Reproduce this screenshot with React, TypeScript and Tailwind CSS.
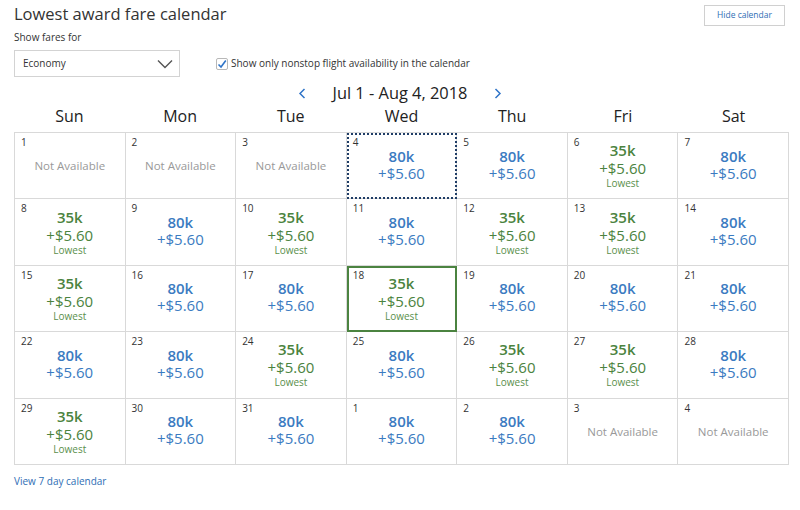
import React from 'react'

type Fare = 'na' | 'high' | 'low'

const DAYS = ['Sun', 'Mon', 'Tue', 'Wed', 'Thu', 'Fri', 'Sat']

const CELLS: { day: number; fare: Fare; mark?: 'focus' | 'selected' }[] = [
  { day: 1, fare: 'na' },
  { day: 2, fare: 'na' },
  { day: 3, fare: 'na' },
  { day: 4, fare: 'high', mark: 'focus' },
  { day: 5, fare: 'high' },
  { day: 6, fare: 'low' },
  { day: 7, fare: 'high' },
  { day: 8, fare: 'low' },
  { day: 9, fare: 'high' },
  { day: 10, fare: 'low' },
  { day: 11, fare: 'high' },
  { day: 12, fare: 'low' },
  { day: 13, fare: 'low' },
  { day: 14, fare: 'high' },
  { day: 15, fare: 'low' },
  { day: 16, fare: 'high' },
  { day: 17, fare: 'high' },
  { day: 18, fare: 'low', mark: 'selected' },
  { day: 19, fare: 'high' },
  { day: 20, fare: 'high' },
  { day: 21, fare: 'high' },
  { day: 22, fare: 'high' },
  { day: 23, fare: 'high' },
  { day: 24, fare: 'low' },
  { day: 25, fare: 'high' },
  { day: 26, fare: 'low' },
  { day: 27, fare: 'low' },
  { day: 28, fare: 'high' },
  { day: 29, fare: 'low' },
  { day: 30, fare: 'high' },
  { day: 31, fare: 'high' },
  { day: 1, fare: 'high' },
  { day: 2, fare: 'high' },
  { day: 3, fare: 'na' },
  { day: 4, fare: 'na' },
]

export default function App() {
  return (
    <div className="w-[800px] h-[510px] bg-white px-[14px] text-[#333] font-['Open_Sans',sans-serif]">
      <div className="flex items-start justify-between pt-[2px]">
        <h1 className="text-[16.5px] leading-[24px] text-[#333]">Lowest award fare calendar</h1>
        <button className="mt-[3px] mr-[1px] w-[81px] h-[21px] border border-[#d0d0d0] text-[8.5px] text-[#2f6eb5]">
          Hide calendar
        </button>
      </div>
      <div className="mt-[4px] text-[10px] leading-[14px]">Show fares for</div>

      <div className="mt-[6px] flex items-center">
        <div className="w-[166px] h-[27px] border border-[#d3d3d3] flex items-center justify-between pl-[8px] pr-[6px]">
          <span className="text-[10px]">Economy</span>
          <svg width="16" height="10" viewBox="0 0 16 10" fill="none">
            <path d="M1 1.5 L8 8.5 L15 1.5" stroke="#555" strokeWidth="1.4" />
          </svg>
        </div>
        <label className="ml-[36px] flex items-center gap-[3px] text-[10px]">
          <span className="w-[12px] h-[12px] border border-[#b8b8b8] rounded-[2px] bg-white flex items-center justify-center">
            <svg width="10" height="10" viewBox="0 0 10 10" fill="none">
              <path d="M1.5 5.5 L4 8 L8.8 1.5" stroke="#2f74c8" strokeWidth="1.6" />
            </svg>
          </span>
          Show only nonstop flight availability in the calendar
        </label>
      </div>

      <div className="mt-[4px] flex items-center justify-center gap-[27px] h-[24px]">
        <svg width="8" height="11" viewBox="0 0 8 11" fill="none">
          <path d="M6.5 1 L2 5.5 L6.5 10" stroke="#2f74c8" strokeWidth="1.5" />
        </svg>
        <span className="text-[16.4px] leading-[22px] text-[#222]">Jul 1 - Aug 4, 2018</span>
        <svg width="8" height="11" viewBox="0 0 8 11" fill="none">
          <path d="M1.5 1 L6 5.5 L1.5 10" stroke="#2f74c8" strokeWidth="1.5" />
        </svg>
      </div>

      <div className="grid grid-cols-7 w-[775px] h-[22px] items-center">
        {DAYS.map((d) => (
          <div key={d} className="text-center text-[16px] leading-[22px] text-[#222]">
            {d}
          </div>
        ))}
      </div>

      <div className="mt-[5px] grid grid-cols-7 w-[775px] border-l border-t border-[#d9d9d9]">
        {CELLS.map((c, i) => (
          <Cell key={i} {...c} />
        ))}
      </div>

      <div className="mt-[9px] text-[10px] text-[#2f6eb5]">View 7 day calendar</div>
    </div>
  )
}

function Cell({ day, fare, mark }: { day: number; fare: Fare; mark?: 'focus' | 'selected' }) {
  const markCls =
    mark === 'focus'
      ? 'outline-2 outline-dotted outline-[#1f3d66] -outline-offset-2'
      : mark === 'selected'
        ? 'outline-2 outline-[#4b8340] -outline-offset-2'
        : ''

  return (
    <div className={`h-[66.4px] border-r border-b border-[#d9d9d9] grid ${markCls}`}>
      <span className="[grid-area:1/1] self-start justify-self-start pl-[6px] pt-[3px] text-[10px] leading-[13px] text-[#333]">
        {day}
      </span>
      <div className="[grid-area:1/1] self-center text-center">
        {fare === 'na' && <div className="text-[11.5px] text-[#999]">Not Available</div>}
        {fare === 'high' && (
          <div className="text-[#3b7bc1] pb-[2px]">
            <div className="text-[15px] leading-[17px] font-semibold">80k</div>
            <div className="text-[15px] leading-[17px]">+$5.60</div>
          </div>
        )}
        {fare === 'low' && (
          <div className="text-[#4b8340] pb-[1px]">
            <div className="text-[15px] leading-[18px] font-semibold">35k</div>
            <div className="text-[15px] leading-[18px]">+$5.60</div>
            <div className="text-[10px] leading-[12px] text-[#5a8f4c]">Lowest</div>
          </div>
        )}
      </div>
    </div>
  )
}
